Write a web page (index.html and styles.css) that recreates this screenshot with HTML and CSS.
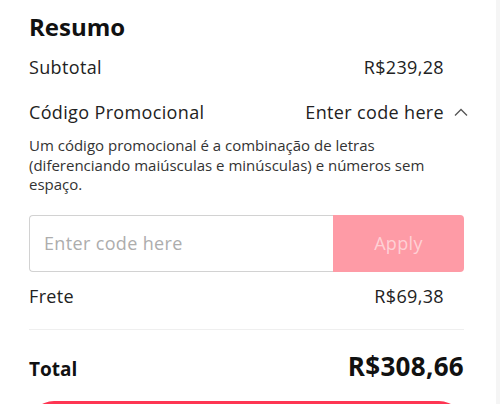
FILE: index.html
```html
<!DOCTYPE html>
<html>
<head>
    <title>Resumo</title>
    <link rel="stylesheet" href="styles.css">
</head>
<body>
    <div class="summary">
        <h2 class="summary-title">Resumo</h2>

        <div class="row">
            <span>Subtotal</span>
            <span class="row-value">R$239,28</span>
        </div>

        <div class="row promo-row">
            <span>Código Promocional</span>
            <span class="promo-toggle">
                Enter code here
                <svg class="chevron" width="14" height="8" viewBox="0 0 14 8">
                    <path d="M1 7.5 L7 1.5 L13 7.5" fill="none" stroke="#555" stroke-width="1.3"/>
                </svg>
            </span>
        </div>

        <p class="promo-hint">Um código promocional é a combinação de letras (diferenciando maiúsculas e minúsculas) e números sem espaço.</p>

        <div class="promo-form">
            <input class="promo-input" type="text" placeholder="Enter code here">
            <button class="promo-apply" disabled>Apply</button>
        </div>

        <div class="row">
            <span>Frete</span>
            <span class="row-value">R$69,38</span>
        </div>

        <div class="divider"></div>

        <div class="total-row">
            <span class="total-label">Total</span>
            <span class="total-value">R$308,66</span>
        </div>

        <button class="checkout" aria-label="Finalizar compra"></button>
    </div>
</body>
</html>
```

FILE: styles.css
```css
body {
    font-family: "Open Sans", Arial, sans-serif;
    background-color: #f5f5f5;
    margin: 0;
    padding: 0;
    overflow: hidden;
}

.summary {
    width: 496px;
    height: 404px;
    box-sizing: border-box;
    background-color: #fff;
    padding: 11px 32px 0 29px;
    color: #222;
    overflow: hidden;
}

.summary-title {
    font-size: 24px;
    line-height: 32px;
    font-weight: 700;
    color: #111;
    margin: 0 0 11px 0;
}

.row {
    display: flex;
    justify-content: space-between;
    align-items: center;
    font-size: 18px;
    letter-spacing: 0.35px;
    line-height: 26px;
    height: 26px;
    padding-right: 20px;
}

.promo-row {
    margin-top: 19px;
    padding-right: 0;
}

.promo-toggle {
    display: flex;
    align-items: center;
}

.chevron {
    margin-left: 10px;
    margin-right: -4px;
}

.promo-hint {
    font-size: 15px;
    line-height: 19.5px;
    color: #333;
    margin: 11px 0 0 0;
}

.promo-form {
    display: flex;
    height: 57px;
    margin: 20px 0 11px 0;
}

.promo-input {
    flex: 1;
    min-width: 0;
    box-sizing: border-box;
    height: 57px;
    border: 1px solid #d2d2d2;
    border-right: none;
    border-radius: 4px 0 0 4px;
    padding: 0 14px;
    font-family: "Open Sans", Arial, sans-serif;
    font-size: 18px;
    letter-spacing: 0.35px;
    color: #222;
    outline: none;
}

.promo-input::placeholder {
    color: #adadad;
}

.promo-apply {
    width: 131px;
    height: 57px;
    border: none;
    border-radius: 0 4px 4px 0;
    background-color: #fe9ba6;
    color: rgba(255, 255, 255, 0.55);
    font-family: "Open Sans", Arial, sans-serif;
    font-size: 18px;
    letter-spacing: 0.35px;
}

.divider {
    height: 1px;
    background-color: #efefef;
    margin-top: 20px;
}

.total-row {
    display: flex;
    justify-content: space-between;
    align-items: baseline;
    line-height: 36px;
    margin-top: 18px;
}

.total-label {
    font-size: 19px;
    font-weight: 700;
    color: #111;
}

.total-value {
    font-size: 26px;
    letter-spacing: 0.3px;
    font-weight: 700;
    color: #111;
}

.checkout {
    display: block;
    width: 100%;
    height: 50px;
    margin-top: 14px;
    border: none;
    border-radius: 25px;
    background-color: #fe3552;
}
```
